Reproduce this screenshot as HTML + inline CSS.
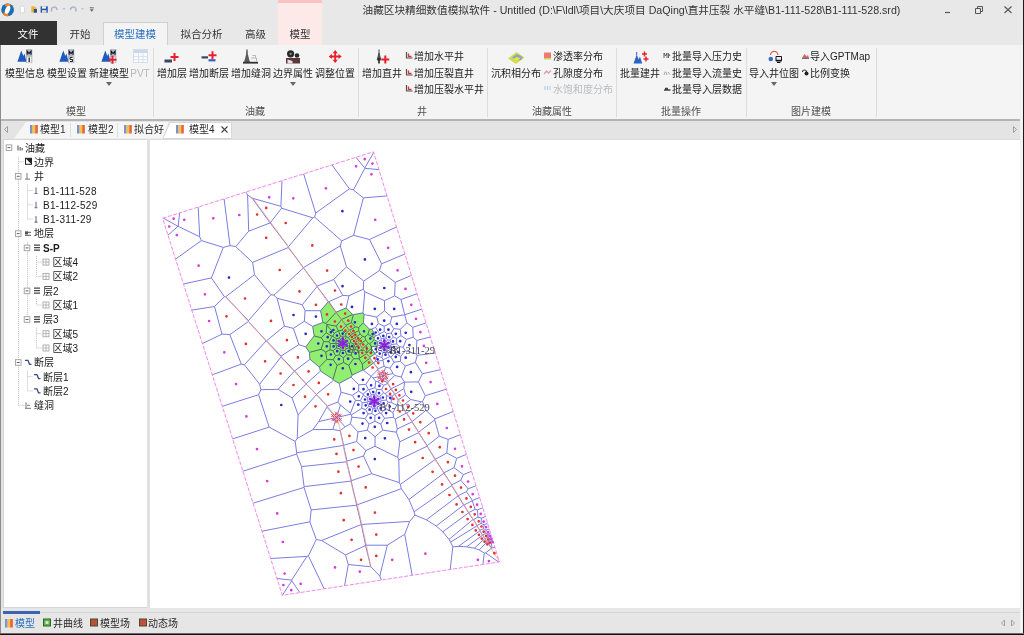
<!DOCTYPE html>
<html lang="zh">
<head>
<meta charset="utf-8">
<title>油藏区块精细数值模拟软件</title>
<style>
*{box-sizing:border-box;margin:0;padding:0}
html,body{width:1024px;height:635px;overflow:hidden;background:#e1e1e1}
body{position:relative;font-family:"Liberation Sans","Noto Sans CJK SC",sans-serif;font-size:10px;color:#2a2a2a;line-height:12px}
.abs{position:absolute}
.t{position:absolute;white-space:nowrap;height:12px;line-height:12px}
.c{transform:translateX(-50%)}
#titlebar{left:0;top:0;width:1024px;height:22px;background:#e8e8e8}
#tabrow{left:0;top:22px;width:1024px;height:23px;background:#e8e8e8}
#ribbon{left:0;top:45px;width:1024px;height:76px;background:#f4f4f4;border-bottom:2px solid #b4b4b4}
.sep{position:absolute;top:48px;width:1px;height:69px;background:#dcdcdc}
.gl{position:absolute;top:105.5px;white-space:nowrap;transform:translateX(-50%);color:#505050}
.bl{position:absolute;top:68px;white-space:nowrap;transform:translateX(-50%);color:#222}
.sl{position:absolute;white-space:nowrap;color:#222}
.dd{position:absolute;width:0;height:0;border-left:3px solid transparent;border-right:3px solid transparent;border-top:4px solid #666;top:82px}
#doctabs{left:0;top:121px;width:1024px;height:18px;background:#e4e4e4}
#left{left:3px;top:138.5px;width:143.5px;height:469.5px;background:#fff;border:1px solid #d6d6d6;border-right:none}
#main{left:150px;top:138.5px;width:870px;height:469.5px;background:#fff;border-top:1px solid #dcdcdc}
#bottom{left:0;top:608px;width:1021px;height:26px;background:#e6e6e6}
.tr{position:absolute;white-space:nowrap;height:14px;line-height:14px;font-size:10px;color:#1a1a1a}
.eb{position:absolute;width:7px;height:7px;border:1px solid #9a9a9a;background:#fff}
.eb:after{content:"";position:absolute;left:1px;top:2px;width:3px;height:1px;background:#555}
.t,.tr,.bl,.sl,.gl,svg{filter:blur(.35px)}
</style>
</head>
<body>
<div id="titlebar" class="abs"></div>
<div id="tabrow" class="abs"></div>
<!-- contextual tab header -->
<div class="abs" style="left:277.500px;top:0;width:44px;height:45px;background:#fce9e8"></div>
<div class="abs" style="left:277.500px;top:0;width:44px;height:2.500px;background:#f8c3c2"></div>
<!-- logo -->
<svg class="abs" style="left:0;top:0" width="100" height="22" viewBox="0 0 100 22">
<circle cx="7.600" cy="9.800" r="6.400" fill="#1b6db6"/>
<path d="M4.300 4.400A6.400 6.400 0 0 1 10.900 4.400L9.600 6.800A3.600 3.600 0 0 0 5.800 6.600z" fill="#f08428"/>
<path d="M2.300 13.400A6.400 6.400 0 0 0 8.600 16.100L7.900 13.400A3.600 3.600 0 0 1 4.800 12z" fill="#f08428"/>
<ellipse cx="7.600" cy="9.800" rx="2.300" ry="4.300" transform="rotate(22 7.600 9.800)" fill="#fff"/>
<path d="M20.300 6h2.700l1.500 1.500v5.200h-4.200z" fill="#fff" stroke="#cfcfcf" stroke-width=".7"/>
<path d="M31.300 6.300h3.200v1h2v5.200h-5.200z" fill="#eab530"/><rect x="33.800" y="9" width="3.200" height="3.700" fill="#2e4f9a"/>
<rect x="40.600" y="6.300" width="7.200" height="6.400" fill="#2b5cb2"/><rect x="42" y="6.300" width="4" height="2.300" fill="#f4f6fa"/><rect x="42" y="10.200" width="4.400" height="2.500" fill="#dfe6d0"/>
<path d="M52 11.500a2.800 2.800 0 1 1 5 -1.500" fill="none" stroke="#a9b3c6" stroke-width="1.500"/>
<path d="M62.700 8.300h2.600l-1.300 1.600z" fill="#b4b4b4"/>
<path d="M75.500 11.500a2.800 2.800 0 1 0 -5 -1.500" fill="none" stroke="#a9b3c6" stroke-width="1.500"/>
<path d="M81.200 8.300h2.600l-1.300 1.600z" fill="#b4b4b4"/>
<path d="M89.800 7.800h4" stroke="#666" stroke-width="1"/><path d="M89.800 9.300h4l-2 2.400z" fill="#666"/>
</svg>
<div class="t" style="left:362.500px;top:4px;font-size:10.65px;color:#333">油藏区块精细数值模拟软件 - Untitled (D:\F\ldl\项目\大庆项目 DaQing\直井压裂 水平缝\B1-111-528\B1-111-528.srd)</div>
<!-- window buttons -->
<svg class="abs" style="left:930px;top:0" width="94" height="22" viewBox="0 0 94 22"><path d="M15 12.5h5" stroke="#555" stroke-width="1.2"/><path d="M45.5 8.5h5v5h-5zM47.5 8.5v-2h5v5h-2" fill="none" stroke="#555" stroke-width="1"/><path d="M74.500 6.500l7 6.500M81.500 6.500l-7 6.500" stroke="#555" stroke-width="1.100"/></svg>
<!-- ribbon tabs -->
<div class="abs" style="left:0;top:21px;width:57px;height:24px;background:#323232"></div>
<div class="t c" style="left:28px;top:27.6px;color:#fff;font-size:10.5px">文件</div>
<div class="t c" style="left:80px;top:27.6px;font-size:10.5px;color:#333">开始</div>
<div class="abs" style="left:103px;top:22px;width:65px;height:24px;background:#f4f4f4;border:1px solid #d0d0d0;border-bottom:none"></div>
<div class="t c" style="left:135px;top:27.6px;font-size:10.5px;color:#2a6fc0">模型建模</div>
<div class="t c" style="left:201.500px;top:27.6px;font-size:10.5px;color:#333">拟合分析</div>
<div class="t c" style="left:255.500px;top:27.6px;font-size:10.5px;color:#333">高级</div>
<div class="t c" style="left:300px;top:27.6px;font-size:10.5px;color:#333">模型</div>
<div id="ribbon" class="abs"></div>
<div class="sep" style="left:153px"></div><div class="sep" style="left:358px"></div><div class="sep" style="left:487px"></div><div class="sep" style="left:616px"></div><div class="sep" style="left:746px"></div><div class="sep" style="left:876px"></div>
<div class="gl" style="left:76px">模型</div><div class="gl" style="left:255px">油藏</div><div class="gl" style="left:422px">井</div><div class="gl" style="left:552px">油藏属性</div><div class="gl" style="left:681px">批量操作</div><div class="gl" style="left:811px">图片建模</div>
<!-- large buttons labels -->
<div class="bl" style="left:25px">模型信息</div><div class="bl" style="left:67px">模型设置</div><div class="bl" style="left:109px">新建模型</div><div class="bl" style="left:140px;color:#b8b8b8">PVT</div>
<div class="bl" style="left:172px">增加层</div><div class="bl" style="left:209px">增加断层</div><div class="bl" style="left:251px">增加缝洞</div><div class="bl" style="left:293px">边界属性</div><div class="bl" style="left:335px">调整位置</div>
<div class="bl" style="left:382px">增加直井</div><div class="bl" style="left:516px">沉积相分布</div><div class="bl" style="left:640px">批量建井</div><div class="bl" style="left:774px">导入井位图</div>
<div class="dd" style="left:106px"></div><div class="dd" style="left:290px"></div><div class="dd" style="left:771px"></div>
<!-- small buttons -->
<div class="sl" style="left:414px;top:51px">增加水平井</div><div class="sl" style="left:414px;top:67.5px">增加压裂直井</div><div class="sl" style="left:414px;top:84px">增加压裂水平井</div>
<div class="sl" style="left:553px;top:51px">渗透率分布</div><div class="sl" style="left:553px;top:67.5px">孔隙度分布</div><div class="sl" style="left:553px;top:84px;color:#b9bcc2">水饱和度分布</div>
<div class="sl" style="left:672px;top:51px">批量导入压力史</div><div class="sl" style="left:672px;top:67.5px">批量导入流量史</div><div class="sl" style="left:672px;top:84px">批量导入层数据</div>
<div class="sl" style="left:810px;top:51px">导入GPTMap</div><div class="sl" style="left:810px;top:67.5px">比例变换</div>
<!-- ribbon icons placeholder -->
<svg id="ricons" class="abs" style="left:0;top:45px" width="1024" height="50" viewBox="0 45 1024 50">
<defs>
<g id="drk"><path d="M-.3 12.300l3.900-11.300l2 5.500l1.200-2.500l2 8.300z" fill="#1f5bbf"/><rect x="8.300" y="-.400" width="6.300" height="14" fill="#aeb6c4"/><rect x="9.300" y="7.300" width="4.300" height="5.700" fill="#f0f2f6"/><path d="M9.500 5.200v-3.400l1.900 2.200l1.900-2.200v3.400" stroke="#111" stroke-width="1.100" fill="none"/></g>
<g id="plus"><path d="M-4 0h8M0-4v8" stroke="#e8202a" stroke-width="2"/></g>
<g id="sm1"><path d="M1 0v6h6" stroke="#555" stroke-width="1.200" fill="none"/><path d="M3 1.500v3h3" stroke="#d8323a" stroke-width="1.400" fill="none"/></g>
</defs>
<use href="#drk" x="17.700" y="49.500"/><path d="M29.200 57.500v4.500" stroke="#1a1a1a" stroke-width="1.200"/>
<use href="#drk" x="59.700" y="49.500"/><path d="M72.500 57.500h-2.500v2h2.500v2h-2.500" stroke="#1a1a1a" stroke-width="1" fill="none"/>
<use href="#drk" x="101.700" y="49.500"/><use href="#plus" x="112.500" y="59.700"/>
<rect x="133.500" y="49.500" width="14" height="13" fill="#f8fafc" stroke="#d5dde8" stroke-width="1"/><rect x="134" y="50" width="13" height="3" fill="#c9d8ec"/><path d="M134 56.500h13M134 59.500h13M138.500 53v9.500M143 53v9.500" stroke="#d5dde8" stroke-width=".8"/>
<!-- add layer -->
<rect x="164.500" y="59.500" width="7.500" height="3" fill="#3d4660"/><use href="#plus" x="174.500" y="57"/>
<!-- add fault -->
<rect x="201.500" y="56.300" width="6.500" height="2.200" fill="#3d4660"/><rect x="208.500" y="59.200" width="7" height="2.200" fill="#3b58c8"/><use href="#plus" x="212.500" y="55.200"/>
<!-- add cavity -->
<path d="M247 51l-3 11.500h6z" fill="#5a5a5a"/><path d="M247 49.500v4" stroke="#444" stroke-width="1.200"/><rect x="243" y="61.800" width="15" height="1.800" fill="#333"/><path d="M251 58h5.500v3.500M252.500 55.500h3v2.500" stroke="#b5b5b5" stroke-width="1" fill="none"/>
<!-- boundary property -->
<circle cx="290.600" cy="53.800" r="3.600" fill="#2a2a2a"/><circle cx="290.600" cy="53.800" r="1.100" fill="#999"/><circle cx="297" cy="55.500" r="2.300" fill="#2a2a2a"/><path d="M286 58h14v5.500h-14z" fill="#5a3a3a"/><path d="M287.500 63.500v-4l5 1.500v2.500z" fill="#e8e0e0"/>
<!-- move -->
<path d="M335.200 50l2.600 3.200h-1.700v2.400h2.400v-1.700l3.200 2.600l-3.200 2.600v-1.700h-2.400v2.400h1.700l-2.600 3.200l-2.600-3.200h1.700v-2.400h-2.400v1.700l-3.200-2.600l3.200-2.600v1.700h2.400v-2.400h-1.700z" fill="#e8202a"/>
<!-- add vertical well -->
<path d="M379 49.500v4M379 53l-1.800 7h3.600z" stroke="#444" stroke-width="1" fill="#555"/><path d="M379 58v5.500" stroke="#222" stroke-width="1.600"/><use href="#plus" x="385.300" y="59.500"/>
<use href="#sm1" x="405.500" y="52"/><use href="#sm1" x="405.500" y="69"/><use href="#sm1" x="405.500" y="85"/>
<!-- facies -->
<path d="M508 58.500l8.500-6.500l8 5.500l-8.500 6.500z" fill="#d2dc50"/><path d="M512 57.500l5-3.500l5.500 3l-1 3l-6 .5z" fill="#8fa4c0"/><path d="M513 59l4-2l3.500 1.500l-4 2.500z" fill="#e6e840"/>
<!-- perm -->
<rect x="544" y="52.500" width="7" height="6.500" fill="#ee7b6c"/><rect x="544" y="58" width="7" height="1.500" fill="#c8d860"/>
<path d="M544 74l2.500-3l2 2l2.500-2.500" stroke="#d9a0a8" stroke-width="1.300" fill="none"/>
<path d="M545 86v4M547.500 86v4M550 86v4" stroke="#b8d0ea" stroke-width="1.200"/>
<!-- batch wells -->
<path d="M633.500 63.500l3.200-9l2 5l1.200-3l2.300 7z" fill="#2b62c4"/><path d="M636.700 55v-3" stroke="#2b62c4" stroke-width="1"/>
<path d="M642 54h5M644.500 51.500v5M643.500 59h5M646 56.500v5" stroke="#e8202a" stroke-width="1.400"/>
<path d="M664 58v-5l1.500 3l1.500-3v5M668.500 58v-4.500l1.500 2.500" stroke="#555" stroke-width=".9" fill="none"/>
<path d="M664 75c1-4 2-4 3 0M668 72l2 2.500" stroke="#999" stroke-width="1" fill="none"/>
<path d="M664 90h6.500M665 88.500h3" stroke="#444" stroke-width="1.300"/>
<!-- import well map -->
<path d="M770.500 55a3.700 3.700 0 0 1 7.400 0" stroke="#e06058" stroke-width="1.300" fill="none"/><circle cx="770.800" cy="59" r="2.300" fill="#3a6cc8"/><rect x="775.500" y="56" width="6.500" height="5.500" rx="1" fill="#111"/><rect x="776.500" y="57" width="4.500" height="2.800" fill="#e8eef6"/><path d="M777 62.500h3.500" stroke="#111" stroke-width="1"/>
<path d="M802 58l2.500-4l2 2.500l1.500-1.500l1 3z" fill="#c86a60"/><path d="M802 58.500h7" stroke="#6a6a90" stroke-width="1"/>
<path d="M802.500 72a2 2 0 0 1 4 0" stroke="#444" stroke-width="1.200" fill="none"/><circle cx="806.500" cy="73.500" r="2" fill="#222"/>

</svg>
<!-- doc tabs -->
<div id="doctabs" class="abs"></div>
<svg class="abs" style="left:0;top:120px" width="1024" height="19" viewBox="0 120 1024 19">
<path d="M14 138.500L26 122H168.500L163 138.500z" fill="#f6f6f6"/>
<path d="M70.500 123v14M117.500 123v14" stroke="#dedede" stroke-width="1"/>
<path d="M163 138.500L170 122.500H231.500V138.500z" fill="#fff" stroke="#cfcfcf" stroke-width=".8"/>
<path d="M7.500 126.500l-3 3l3 3z" fill="none" stroke="#999" stroke-width=".9"/>
<path d="M1013.500 126.500l3 3l-3 3z" fill="none" stroke="#999" stroke-width=".9"/>
<g id="ti"><rect x="30" y="125" width="2.600" height="8.500" fill="#7f92c8"/><rect x="32.600" y="125" width="2.600" height="8.500" fill="#f4c542"/><rect x="35.200" y="125" width="2.600" height="8.500" fill="#e8603c"/></g>
<use href="#ti" x="47"/><use href="#ti" x="94"/><use href="#ti" x="146"/>
<path d="M221.500 126.500l6 6M227.500 126.500l-6 6" stroke="#444" stroke-width="1.100"/>
</svg>
<div class="t" style="left:40px;top:124px">模型1</div><div class="t" style="left:88px;top:124px">模型2</div><div class="t" style="left:134px;top:124px">拟合好</div><div class="t" style="left:189px;top:124px">模型4</div>
<div id="left" class="abs"></div>
<div id="main" class="abs"></div>
<div id="bottom" class="abs"></div>
<div class="abs" style="left:1020px;top:0;width:3px;height:635px;background:#f2f2f2"></div>
<div class="abs" style="left:1020px;top:0;width:3px;height:45px;background:#e8e8e8"></div>
<div class="abs" style="left:1023px;top:0;width:1px;height:635px;background:#1a1a1a"></div>
<div class="abs" style="left:0;top:45px;width:1px;height:590px;background:#8c8c8c"></div>
<div class="abs" style="left:0;top:633px;width:1024px;height:2px;background:#141414"></div><div class="abs" style="left:0;top:633px;width:1024px;height:1px;background:#6a6a6a"></div>
<div class="abs" style="left:3px;top:612px;width:1017px;height:1px;background:#d4d4d4"></div><div class="abs" style="left:3px;top:611px;width:37px;height:3px;background:#3d64b2"></div>
<div class="t" style="left:15px;top:618px;color:#2a6fc0">模型</div><div class="t" style="left:53px;top:618px">井曲线</div><div class="t" style="left:100px;top:618px">模型场</div><div class="t" style="left:148px;top:618px">动态场</div>
<svg class="abs" style="left:0;top:612px" width="1024" height="20" viewBox="0 612 1024 20">
<use href="#ti" x="-25" y="494"/>
<rect x="43.500" y="619" width="7" height="7" fill="#5fae4a" stroke="#2d6a24" stroke-width="1"/><rect x="45.500" y="621" width="3" height="3" fill="#cfe8c4"/>
<rect x="90.500" y="619" width="7" height="7" fill="#b5543a" stroke="#4a4a30" stroke-width="1"/>
<rect x="139.500" y="619" width="7" height="7" fill="#c2503c" stroke="#4a4a30" stroke-width="1"/>
<path d="M1004.500 620l-3 3l3 3z" fill="none" stroke="#999" stroke-width=".9"/><path d="M1011.500 620l3 3l-3 3z" fill="none" stroke="#999" stroke-width=".9"/>
</svg>
<svg class="abs" style="left:0;top:139px" width="150" height="290" viewBox="0 139 150 290">
<path d="M18.5 156.8V405.3M27.5 184.5V219.1M27.5 241.7V319.3M36.5 256.1V276.4M36.5 299.0V305.0M36.5 327.7V348.0M27.5 370.6V390.9M18.5 161.8H24M27.5 190.5H33M27.5 204.8H33M27.5 219.1H33M36.5 262.1H42M36.5 276.4H42M36.5 305.0H42M36.5 333.7H42M36.5 348.0H42M27.5 376.6H33M27.5 390.9H33M18.5 405.3H24" stroke="#bdbdbd" stroke-width="1" stroke-dasharray="1 1" fill="none"/>
<rect x="6.2" y="144.9" width="5.6" height="5.6" fill="#fff" stroke="#9c9c9c" stroke-width=".9"/><path d="M7.5 147.7h3" stroke="#555" stroke-width=".9"/>
<path d="M18.0 150.5v-5M20.2 150.5v-3.500M22.2 150.5v-2.500" stroke="#666" stroke-width="1.2"/>
<rect x="25.5" y="158.3" width="6" height="6" fill="#fff" stroke="#222" stroke-width="1"/><path d="M25.5 158.3h6v6z" fill="#222"/>
<rect x="15.4" y="173.5" width="5.6" height="5.6" fill="#fff" stroke="#9c9c9c" stroke-width=".9"/><path d="M16.7 176.3h3" stroke="#555" stroke-width=".9"/>
<path d="M27.0 179.1v-6M25.0 179.1h5" stroke="#777" stroke-width="1"/>
<path d="M36.0 193.5v-6M34.5 193.5h3" stroke="#6a7290" stroke-width="1.1"/>
<path d="M36.0 207.8v-6M34.5 207.8h3" stroke="#6a7290" stroke-width="1.1"/>
<path d="M36.0 222.1v-6M34.5 222.1h3" stroke="#6a7290" stroke-width="1.1"/>
<rect x="15.4" y="230.8" width="5.6" height="5.6" fill="#fff" stroke="#9c9c9c" stroke-width=".9"/><path d="M16.7 233.6h3" stroke="#555" stroke-width=".9"/>
<path d="M25.0 232.4h6M25.0 235.4h6" stroke="#777" stroke-width="1.4"/><rect x="25.0" y="231.4" width="3" height="3" fill="#555"/>
<rect x="24.2" y="245.1" width="5.6" height="5.6" fill="#fff" stroke="#9c9c9c" stroke-width=".9"/><path d="M25.5 247.9h3" stroke="#555" stroke-width=".9"/>
<path d="M34.0 245.2h6M34.0 247.7h6M34.0 250.2h6" stroke="#444" stroke-width="1.3"/>
<rect x="43.0" y="259.1" width="6" height="6" fill="#fff" stroke="#aaa" stroke-width="0.9"/><path d="M46.0 259.1v6M43.0 262.1h6" stroke="#aaa" stroke-width="0.8"/>
<rect x="43.0" y="273.4" width="6" height="6" fill="#fff" stroke="#aaa" stroke-width="0.9"/><path d="M46.0 273.4v6M43.0 276.4h6" stroke="#aaa" stroke-width="0.8"/>
<rect x="24.2" y="288.1" width="5.6" height="5.6" fill="#fff" stroke="#9c9c9c" stroke-width=".9"/><path d="M25.5 290.9h3" stroke="#555" stroke-width=".9"/>
<path d="M34.0 288.2h6M34.0 290.7h6M34.0 293.2h6" stroke="#444" stroke-width="1.3"/>
<rect x="43.0" y="302.0" width="6" height="6" fill="#fff" stroke="#aaa" stroke-width="0.9"/><path d="M46.0 302.0v6M43.0 305.0h6" stroke="#aaa" stroke-width="0.8"/>
<rect x="24.2" y="316.7" width="5.6" height="5.6" fill="#fff" stroke="#9c9c9c" stroke-width=".9"/><path d="M25.5 319.5h3" stroke="#555" stroke-width=".9"/>
<path d="M34.0 316.8h6M34.0 319.3h6M34.0 321.8h6" stroke="#444" stroke-width="1.3"/>
<rect x="43.0" y="330.7" width="6" height="6" fill="#fff" stroke="#aaa" stroke-width="0.9"/><path d="M46.0 330.7v6M43.0 333.7h6" stroke="#aaa" stroke-width="0.8"/>
<rect x="43.0" y="345.0" width="6" height="6" fill="#fff" stroke="#aaa" stroke-width="0.9"/><path d="M46.0 345.0v6M43.0 348.0h6" stroke="#aaa" stroke-width="0.8"/>
<rect x="15.4" y="359.7" width="5.6" height="5.6" fill="#fff" stroke="#9c9c9c" stroke-width=".9"/><path d="M16.7 362.5h3" stroke="#555" stroke-width=".9"/>
<path d="M25.0 360.3h3l1.500 4h2" stroke="#3a4a90" stroke-width="1.3" fill="none"/>
<path d="M34.0 374.6h3l1.500 4h2" stroke="#3a4a90" stroke-width="1.3" fill="none"/>
<path d="M34.0 388.9h3l1.500 4h2" stroke="#3a4a90" stroke-width="1.3" fill="none"/>
<path d="M26.0 408.3v-6M25.0 408.3h6M27.0 405.3h3" stroke="#777" stroke-width="1"/>
</svg>
<div class="tr" style="left:25.0px;top:141.5px">油藏</div>
<div class="tr" style="left:34.0px;top:155.8px">边界</div>
<div class="tr" style="left:34.0px;top:170.1px">井</div>
<div class="tr" style="left:43.0px;top:184.5px;letter-spacing:.3px">B1-111-528</div>
<div class="tr" style="left:43.0px;top:198.8px;letter-spacing:.3px">B1-112-529</div>
<div class="tr" style="left:43.0px;top:213.1px;letter-spacing:.3px">B1-311-29</div>
<div class="tr" style="left:34.0px;top:227.4px">地层</div>
<div class="tr" style="left:43.0px;top:241.7px;font-weight:bold">S-P</div>
<div class="tr" style="left:52.5px;top:256.1px">区域4</div>
<div class="tr" style="left:52.5px;top:270.4px">区域2</div>
<div class="tr" style="left:43.0px;top:284.7px">层2</div>
<div class="tr" style="left:52.5px;top:299.0px">区域1</div>
<div class="tr" style="left:43.0px;top:313.3px">层3</div>
<div class="tr" style="left:52.5px;top:327.7px">区域5</div>
<div class="tr" style="left:52.5px;top:342.0px">区域3</div>
<div class="tr" style="left:34.0px;top:356.3px">断层</div>
<div class="tr" style="left:43.0px;top:370.6px">断层1</div>
<div class="tr" style="left:43.0px;top:384.9px">断层2</div>
<div class="tr" style="left:34.0px;top:399.3px">缝洞</div>
<svg class="abs" style="left:150px;top:139px" width="870" height="469" viewBox="150 139 870 469" font-family="Liberation Serif,serif">
<path d="M322.8 322.4L312.6 326.3L314.1 335.9L305.7 346.9L309.4 352.4L309.9 359.3L319.3 367.1L320.5 371.1L333.0 379.3L333.6 380.3L339.2 383.4L351.1 377.1L352.2 375.2L362.9 370.1L363.5 370.3L373.7 363.0L373.7 362.8L369.9 358.2L369.9 357.4L375.2 353.8L375.2 353.7L371.4 348.5L371.5 346.8L377.4 346.1L377.9 345.5L377.7 341.5L374.2 339.6L374.2 337.7L375.6 335.9L371.9 329.0L369.5 329.2L363.4 322.8L364.2 314.6L363.0 312.8L353.3 314.6L352.6 314.5L346.2 307.8L336.0 312.1L328.8 301.7L328.4 301.6L320.5 310.7Z" fill="#92ee70" stroke="none"/>
<path d="M163.4 218.1L178.0 226.3M168.0 235.2L178.0 226.3M175.5 259.1L201.4 240.6M178.0 226.3L178.2 226.3M178.2 226.3L179.6 212.9M178.2 226.3L199.7 236.8M183.5 284.0L211.4 277.9M191.7 310.1L214.5 306.5M198.2 207.1L199.7 236.8M199.7 236.8L201.4 240.6M201.4 240.6L223.3 247.4M202.4 343.6L222.0 334.1M211.4 277.9L223.3 247.4M211.4 277.9L224.4 296.7M212.3 374.8L241.3 364.1M214.5 306.5L222.0 334.1M214.5 306.5L224.4 296.7M222.0 334.1L229.8 334.6M222.3 406.3L258.6 394.7M223.3 247.4L230.0 245.6M224.1 198.9L230.0 245.6M224.4 296.7L225.6 296.8M225.6 296.8L248.5 320.7M225.6 296.8L254.5 274.7M229.8 334.6L241.3 364.1M229.8 334.6L248.5 321.5M230.0 245.6L235.7 246.6M232.6 438.9L269.2 427.1M235.7 246.6L248.7 231.2M235.7 246.6L252.6 262.4M241.3 364.1L244.4 364.8M242.9 471.2L296.6 454.1M244.4 364.8L259.6 384.2M244.4 364.8L266.2 340.8M245.9 192.0L247.6 195.0M247.6 195.0L248.7 231.2M247.6 195.0L252.2 198.2M248.5 320.7L248.5 321.5M248.5 320.7L270.9 294.7M248.5 321.5L266.2 340.8M248.7 231.2L270.1 222.9M252.2 198.2L270.1 222.9M252.2 198.2L280.9 206.3M252.6 262.4L254.5 274.7M252.6 262.4L288.3 247.5M253.1 503.2L304.0 487.4M254.5 274.7L270.9 294.7M258.6 394.7L260.9 389.7M258.6 394.7L269.2 427.1M259.6 384.2L260.9 389.7M259.6 384.2L281.2 356.8M260.9 389.7L278.1 389.3M262.0 531.2L309.9 521.8M266.2 340.8L266.4 340.9M266.4 340.9L281.1 356.0M266.4 340.9L284.4 326.1M269.2 427.1L295.2 441.4M270.1 222.9L270.2 222.9M270.2 222.9L281.6 208.2M270.2 222.9L288.4 246.8M270.6 558.5L306.9 556.4M270.9 294.7L273.9 295.2M273.9 295.2L277.1 298.3M273.9 295.2L303.4 267.9M277.0 578.5L291.7 580.1M277.1 298.3L284.4 326.1M277.1 298.3L302.3 304.7M278.1 389.3L292.1 397.9M278.1 389.3L294.4 371.0M280.9 206.3L281.6 208.2M280.9 206.3L282.0 180.7M281.1 356.0L281.2 356.8M281.1 356.0L298.9 344.6M281.2 356.8L294.4 371.0M281.6 208.2L312.8 217.8M282.3 595.3L291.8 580.8M284.4 326.1L293.4 328.4M288.3 247.5L288.4 246.8M288.3 247.5L303.4 267.6M288.4 246.8L312.8 217.8M291.7 580.1L291.8 580.8M291.7 580.1L306.9 556.4M291.8 580.8L299.8 592.6M292.1 397.9L298.1 414.8M292.1 397.9L306.2 384.1M293.4 328.4L298.9 344.6M293.4 328.4L304.3 321.3M294.4 371.0L294.6 371.0M294.6 371.0L306.1 383.9M294.6 371.0L309.9 359.3M295.2 441.4L296.7 452.8M295.2 441.4L297.2 438.5M296.6 454.1L296.7 452.8M296.6 454.1L301.5 466.6M296.7 452.8L343.5 445.4M297.2 438.5L298.1 414.8M297.2 438.5L312.9 429.6M298.1 414.8L316.5 394.7M298.9 344.6L305.7 346.9M301.5 466.6L304.1 486.6M301.5 466.6L346.6 461.8M302.3 304.7L305.1 310.7M302.3 304.7L317.1 286.5M303.4 267.6L303.4 267.9M303.4 267.6L340.3 245.9M303.4 267.9L317.1 286.1M303.6 173.8L315.7 213.1M304.0 487.4L304.1 486.6M304.0 487.4L311.2 509.9M304.1 486.6L351.2 481.1M304.3 321.3L305.1 310.7M304.3 321.3L312.6 326.3M305.1 310.7L320.5 310.7M305.7 346.9L309.4 352.4M305.7 346.9L314.1 335.9M306.1 383.9L306.2 384.1M306.1 383.9L320.5 371.1M306.2 384.1L316.4 394.3M306.9 556.4L308.4 555.8M308.4 555.8L316.3 539.5M308.4 555.8L324.2 588.9M309.4 352.4L309.9 359.3M309.4 352.4L321.1 349.3M309.9 359.3L319.3 367.1M309.9 521.8L311.2 509.9M309.9 521.8L316.3 539.5M311.2 509.9L356.6 505.2M312.6 326.3L314.1 335.9M312.6 326.3L322.8 322.4M312.8 217.8L314.6 217.1M312.9 429.6L318.7 421.6M312.9 429.6L332.8 429.5M314.1 335.9L321.3 337.8M314.6 217.1L315.7 213.1M314.6 217.1L341.7 240.9M315.7 213.1L349.4 188.8M316.3 539.5L321.6 540.5M316.4 394.3L316.5 394.7M316.4 394.3L333.6 380.3M316.5 394.7L327.3 406.1M317.1 286.1L317.1 286.5M317.1 286.1L333.7 279.5M317.1 286.5L328.4 301.6M318.7 421.6L326.9 407.2M318.7 421.6L336.5 417.5M319.3 367.1L320.5 371.1M319.3 367.1L326.8 359.5M320.5 310.7L322.8 322.4M320.5 310.7L328.4 301.6M320.5 371.1L333.0 379.3M321.1 349.3L323.7 341.4M321.1 349.3L325.8 352.0M321.3 337.8L323.7 341.4M321.3 337.8L326.1 332.6M321.6 540.5L345.5 554.9M321.6 540.5L361.3 524.5M322.8 322.4L326.0 323.4M323.7 341.4L328.9 341.9M325.8 352.0L326.8 359.5M325.8 352.0L330.1 349.8M326.0 323.4L326.8 324.4M326.0 323.4L336.0 312.4M326.1 332.6L326.8 325.1M326.1 332.6L332.0 336.4M326.8 324.4L326.8 325.1M326.8 324.4L336.2 326.1M326.8 325.1L334.2 333.4M326.8 359.5L333.2 359.7M326.9 407.2L327.3 406.1M326.9 407.2L336.5 417.5M327.3 406.1L337.8 402.1M328.4 301.6L328.8 301.7M328.8 301.7L336.0 312.1M328.8 301.7L342.8 295.4M328.9 341.9L330.2 343.5M328.9 341.9L332.0 336.4M330.1 349.8L330.2 343.5M330.1 349.8L332.9 350.7M330.2 343.5L335.8 343.4M332.0 164.9L349.4 188.8M332.0 336.4L332.7 336.2M332.7 336.2L334.2 333.4M332.7 336.2L336.5 338.8M332.8 429.5L336.5 417.5M332.8 429.5L340.2 430.7M332.9 350.7L335.6 355.7M332.9 350.7L336.6 348.0M333.0 379.3L333.6 380.3M333.0 379.3L337.1 365.3M333.2 359.7L335.6 355.7M333.2 359.7L337.1 365.3M333.6 380.3L339.2 383.4M333.7 279.5L342.8 295.4M333.7 279.5L346.5 266.8M334.2 333.4L338.3 330.8M335.6 355.7L339.2 354.9M335.8 343.4L335.9 343.5M335.8 343.4L336.5 338.8M335.9 343.5L336.6 348.0M335.9 343.5L342.8 343.3M336.0 312.1L336.0 312.4M336.0 312.1L346.2 307.8M336.0 312.4L341.5 319.5M336.2 326.1L338.3 330.8M336.2 326.1L341.5 319.8M336.5 338.8L339.5 337.8M336.5 417.5L340.4 405.0M336.5 417.5L345.1 426.8M336.5 417.5L350.9 414.2M336.6 348.0L339.7 348.9M337.1 365.3L343.6 362.5M337.8 402.1L340.4 405.0M337.8 402.1L341.1 392.2M338.3 330.8L338.6 330.9M338.6 330.9L340.4 336.2M338.6 330.9L341.9 330.1M339.2 354.9L340.6 350.4M339.2 354.9L343.4 357.7M339.2 383.4L341.1 392.2M339.2 383.4L351.1 377.1M339.5 337.8L340.4 336.2M339.5 337.8L342.8 343.3M339.7 348.9L340.6 350.4M339.7 348.9L342.8 343.3M340.2 430.7L343.6 445.3M340.2 430.7L345.1 426.8M340.3 245.9L341.7 240.9M340.3 245.9L346.5 266.8M340.4 336.2L345.8 336.2M340.4 405.0L350.4 413.3M340.6 350.4L345.2 350.4M341.1 392.2L352.3 395.3M341.5 319.5L341.5 319.8M341.5 319.5L352.6 314.5M341.5 319.8L346.0 325.3M341.7 240.9L353.6 235.3M341.9 330.1L345.9 333.9M341.9 330.1L346.0 325.7M342.8 295.4L348.9 295.8M342.8 343.3L346.1 348.8M342.8 343.3L346.3 336.9M342.8 343.3L349.8 343.1M343.4 357.7L343.6 362.5M343.4 357.7L346.7 354.8M343.5 445.4L343.6 445.3M343.5 445.4L347.0 461.1M343.6 362.5L348.8 365.4M343.6 445.3L356.7 441.5M344.6 585.7L348.3 564.5M345.1 426.8L350.4 423.8M345.2 350.4L346.1 348.8M345.2 350.4L346.7 354.8M345.5 554.9L348.3 564.5M345.5 554.9L365.5 545.5M345.8 336.2L345.9 333.9M345.8 336.2L346.3 336.9M345.9 333.9L349.3 330.1M346.0 325.3L346.0 325.7M346.0 325.3L351.3 322.8M346.0 325.7L349.3 330.1M346.1 348.8L349.1 347.8M346.2 307.8L348.9 295.8M346.2 307.8L352.6 314.5M346.3 336.9L348.2 337.6M346.5 266.8L363.7 281.1M346.6 461.8L347.0 461.1M346.6 461.8L351.4 480.7M346.7 354.8L351.1 355.1M347.0 461.1L363.5 456.0M348.2 337.6L350.4 340.4M348.2 337.6L352.4 333.9M348.3 564.5L370.9 566.8M348.8 365.4L352.2 375.2M348.8 365.4L353.6 358.7M348.9 295.8L363.3 289.2M349.1 347.8L349.8 343.1M349.1 347.8L352.7 350.3M349.3 330.1L349.6 330.1M349.4 188.8L353.4 190.0M349.6 330.1L352.4 333.9M349.6 330.1L355.6 326.9M349.8 343.1L350.4 342.5M350.4 340.4L350.4 342.5M350.4 340.4L354.9 337.9M350.4 342.5L353.5 343.8M350.4 413.3L350.9 414.2M350.4 413.3L355.4 400.3M350.4 423.8L351.9 417.2M350.4 423.8L358.0 431.9M350.9 414.2L351.4 414.9M351.1 355.1L352.7 350.3M351.1 355.1L353.6 358.7M351.1 377.1L352.2 375.2M351.1 377.1L358.8 384.8M351.2 481.1L351.4 480.7M351.2 481.1L356.7 505.0M351.3 322.8L353.3 314.6M351.3 322.8L355.6 326.9M351.4 414.9L351.9 417.2M351.4 414.9L361.7 408.4M351.4 480.7L371.7 473.7M351.9 417.2L365.1 418.6M352.2 375.2L362.9 370.1M352.3 395.3L355.4 400.3M352.3 395.3L358.6 391.1M352.4 333.9L354.9 337.9M352.4 333.9L358.7 330.6M352.6 314.5L353.3 314.6M352.7 350.3L355.0 349.2M353.3 314.6L363.0 312.8M353.4 190.0L363.4 197.9M353.4 190.0L364.8 168.3M353.5 343.8L355.3 347.5M353.5 343.8L357.1 341.2M353.6 235.3L363.4 197.9M353.6 235.3L369.5 239.5M353.6 358.7L359.1 358.8M354.9 337.9L355.0 337.9M355.0 337.9L357.1 341.2M355.0 337.9L360.1 334.1M355.0 349.2L355.3 347.5M355.0 349.2L358.7 351.4M355.3 347.5L359.7 344.3M355.4 400.3L360.5 400.6M355.6 326.9L358.8 327.4M356.0 157.3L364.8 168.0M356.6 505.2L356.7 505.0M356.6 505.2L361.3 524.5M356.7 441.5L358.0 431.9M356.7 441.5L365.9 450.5M356.7 505.0L401.3 488.7M357.1 341.2L357.7 341.4M357.7 341.4L359.7 344.3M357.7 341.4L362.8 336.3M358.0 431.9L367.3 430.2M358.6 391.1L358.8 384.8M358.6 391.1L363.1 394.0M358.7 330.6L358.8 327.4M358.7 330.6L360.1 334.1M358.7 351.4L359.3 358.3M358.7 351.4L362.8 348.8M358.8 327.4L363.4 322.8M358.8 384.8L365.8 384.4M359.1 358.8L359.3 358.3M359.1 358.8L362.3 364.0M359.3 358.3L366.5 353.6M359.7 344.3L359.8 344.3M359.8 344.3L362.8 348.5M359.8 344.3L365.7 340.1M360.1 334.1L362.8 336.3M360.5 400.6L362.2 402.8M360.5 400.6L363.3 395.2M361.3 524.5L365.6 545.2M361.3 524.5L409.7 521.4M361.7 408.4L362.2 402.8M361.7 408.4L365.5 409.5M362.2 402.8L367.3 402.2M362.3 364.0L362.9 370.1M362.3 364.0L369.9 358.2M362.8 336.3L364.9 337.0M362.8 348.5L362.8 348.8M362.8 348.5L368.4 343.4M362.8 348.8L366.5 352.8M362.9 370.1L363.5 370.3M363.0 312.8L364.2 314.6M363.0 312.8L364.8 291.8M363.1 394.0L363.3 395.2M363.1 394.0L368.4 389.5M363.3 289.2L363.7 281.1M363.3 289.2L364.8 291.8M363.3 395.2L367.6 397.6M363.4 197.9L387.0 195.9M363.4 322.8L364.2 314.6M363.4 322.8L369.5 329.2M363.5 370.3L371.1 376.3M363.5 370.3L373.7 363.0M363.5 456.0L365.9 450.5M363.5 456.0L371.7 473.7M363.7 281.1L379.4 270.5M364.2 314.6L376.7 317.0M364.8 168.0L364.8 168.3M364.8 168.0L373.7 152.5M364.8 168.3L379.0 169.6M364.8 291.8L384.5 300.7M364.9 337.0L365.7 340.1M364.9 337.0L367.8 334.4M365.1 418.6L368.1 414.0M365.1 418.6L369.0 424.0M365.5 409.5L368.1 414.0M365.5 409.5L368.7 406.5M365.5 545.5L365.6 545.2M365.5 545.5L370.9 566.8M365.6 545.2L387.3 545.2M365.7 340.1L368.4 343.4M365.8 384.4L368.4 389.5M365.8 384.4L371.1 376.4M365.9 450.5L375.0 446.3M366.5 352.8L366.5 353.6M366.5 352.8L371.4 348.5M366.5 353.6L369.9 357.4M367.3 402.2L367.8 401.6M367.3 402.2L368.7 406.5M367.3 430.2L369.0 424.0M367.3 430.2L375.1 436.8M367.6 397.6L367.8 401.6M367.6 397.6L370.9 395.9M367.8 334.4L369.5 329.2M367.8 334.4L374.2 337.7M367.8 401.6L374.3 401.4M368.1 414.0L371.8 413.5M368.4 343.4L369.7 343.9M368.4 389.5L368.9 389.7M368.7 406.5L371.3 406.9M368.9 389.7L371.3 394.9M368.9 389.7L375.1 387.7M369.0 424.0L374.9 421.3M369.5 239.5L381.6 263.8M369.5 239.5L396.6 226.9M369.5 329.2L371.9 329.0M369.7 343.9L371.5 346.8M369.7 343.9L374.2 339.6M369.9 357.4L369.9 358.2M369.9 357.4L375.2 353.8M369.9 358.2L373.7 362.8M370.9 395.9L371.3 394.9M370.9 395.9L374.3 401.4M370.9 566.8L379.8 576.1M371.1 376.3L371.1 376.4M371.1 376.3L377.5 369.9M371.1 376.4L373.0 378.0M371.3 394.9L375.8 394.0M371.3 406.9L372.8 408.8M371.3 406.9L374.3 401.4M371.4 348.5L371.5 346.8M371.4 348.5L375.2 353.7M371.5 346.8L377.4 346.1M371.7 473.7L399.3 482.6M371.8 413.5L372.8 408.8M371.8 413.5L374.9 415.6M371.9 329.0L375.6 327.4M371.9 329.0L375.6 335.9M372.8 408.8L377.3 407.9M373.0 378.0L375.6 381.3M373.0 378.0L382.9 375.8M373.7 362.8L373.7 363.0M373.7 362.8L375.1 361.7M373.7 363.0L378.1 368.8M374.2 337.7L374.2 339.6M374.2 337.7L375.6 335.9M374.2 339.6L377.7 341.5M374.3 401.4L377.3 395.9M374.3 401.4L377.7 406.9M374.3 401.4L380.8 401.2M374.9 415.6L374.9 421.3M374.9 415.6L379.6 413.0M374.9 421.3L380.8 424.1M375.0 446.3L375.1 436.8M375.0 446.3L397.8 457.4M375.1 361.7L377.0 355.8M375.1 361.7L383.0 360.3M375.1 387.7L375.6 381.3M375.1 387.7L376.7 389.4M375.1 436.8L382.6 430.1M375.2 353.7L375.2 353.8M375.2 353.7L378.8 350.4M375.2 353.8L377.0 355.8M375.6 327.4L378.4 323.5M375.6 327.4L379.6 333.9M375.6 335.9L379.4 334.4M375.6 381.3L377.4 381.6M375.8 394.0L376.7 389.4M375.8 394.0L377.3 395.9M376.7 317.0L378.4 323.5M376.7 317.0L384.5 310.8M376.7 389.4L381.7 389.7M377.0 355.8L381.9 357.6M377.3 395.9L379.9 396.3M377.3 407.9L377.7 406.9M377.3 407.9L379.6 413.0M377.4 346.1L377.9 345.5M377.4 346.1L378.8 350.4M377.4 381.6L381.8 379.4M377.4 381.6L383.7 385.3M377.5 369.9L378.1 368.8M377.5 369.9L382.9 375.8M377.7 341.5L377.9 345.5M377.7 341.5L381.0 339.8M377.7 406.9L381.0 405.2M377.9 345.5L384.4 345.3M378.1 368.8L384.1 366.3M378.4 323.5L384.2 326.2M378.8 350.4L381.4 350.8M379.4 270.5L381.6 263.8M379.4 270.5L395.2 282.3M379.4 334.4L379.6 333.9M379.4 334.4L381.4 338.8M379.6 333.9L384.2 331.5M379.6 413.0L381.2 413.3M379.8 576.1L381.3 580.1M379.8 576.1L387.3 545.2M379.9 396.3L381.3 400.6M379.9 396.3L383.6 392.9M380.8 401.2L381.0 405.2M380.8 401.2L381.3 400.6M380.8 424.1L382.6 430.1M380.8 424.1L384.5 418.3M381.0 339.8L381.4 338.8M381.0 339.8L384.4 345.3M381.0 405.2L385.3 407.6M381.2 413.3L384.5 418.3M381.2 413.3L385.4 408.4M381.3 400.6L386.4 400.0M381.4 338.8L385.9 337.9M381.4 350.8L382.9 352.7M381.4 350.8L384.4 345.3M381.6 263.8L404.9 254.0M381.7 389.7L383.6 392.9M381.7 389.7L383.7 385.3M381.8 379.4L382.9 375.8M381.8 379.4L387.6 382.9M381.9 357.6L382.9 352.7M381.9 357.6L383.1 359.7M382.6 430.1L396.3 432.2M382.9 352.7L387.4 351.8M382.9 375.8L385.6 367.1M382.9 375.8L388.3 381.6M382.9 375.8L393.0 373.5M383.0 360.3L383.1 359.7M383.0 360.3L384.1 366.3M383.1 359.7L389.6 356.8M383.6 392.9L385.5 393.6M383.7 385.3L387.5 383.5M384.1 366.3L385.6 367.1M384.2 326.2L384.2 331.5M384.2 326.2L390.2 323.4M384.2 331.5L386.8 333.5M384.4 345.3L387.4 339.8M384.4 345.3L387.8 350.8M384.4 345.3L390.9 345.1M384.5 300.7L384.5 310.8M384.5 300.7L394.6 295.9M384.5 310.8L391.8 317.0M384.5 418.3L393.5 417.3M385.3 407.6L385.4 408.4M385.3 407.6L388.1 402.2M385.4 408.4L393.0 412.6M385.5 393.6L386.7 396.1M385.5 393.6L391.0 389.0M385.6 367.1L390.0 368.2M385.9 337.9L386.8 333.5M385.9 337.9L387.4 339.8M386.4 400.0L386.7 396.1M386.4 400.0L388.1 402.2M386.7 396.1L392.5 395.9M386.8 333.5L391.3 333.1M387.3 545.2L404.7 534.3M387.4 339.8L390.0 340.2M387.4 351.8L387.8 350.8M387.4 351.8L389.6 356.8M387.5 383.5L387.6 382.9M387.5 383.5L391.0 388.8M387.6 382.9L388.3 381.6M387.8 350.8L391.1 349.1M388.1 402.2L390.9 402.4M388.3 381.6L394.8 375.5M389.6 356.8L391.0 357.1M390.0 340.2L391.4 344.5M390.0 340.2L393.3 337.2M390.0 368.2L393.0 373.5M390.0 368.2L393.9 362.2M390.2 323.4L391.8 317.0M390.2 323.4L393.8 328.6M390.9 345.1L391.1 349.1M390.9 345.1L391.4 344.5M390.9 402.4L392.5 395.9M390.9 402.4L396.7 405.2M391.0 357.1L393.9 362.2M391.0 357.1L394.6 353.2M391.0 388.8L391.0 389.0M391.0 388.8L404.6 382.1M391.0 389.0L394.7 394.4M391.1 349.1L394.6 351.0M391.3 333.1L393.3 337.2M391.3 333.1L393.8 328.6M391.4 344.5L396.7 343.9M391.8 317.0L404.7 314.8M392.5 395.9L394.7 394.4M393.0 373.5L394.8 375.5M393.0 412.6L393.5 417.3M393.0 412.6L396.7 405.2M393.3 337.2L396.6 338.4M393.5 417.3L395.2 419.1M393.8 328.6L400.3 329.3M393.9 362.2L400.4 361.4M394.6 295.9L395.2 282.3M394.6 295.9L401.0 299.5M394.6 351.0L394.6 353.2M394.6 351.0L399.2 346.6M394.6 353.2L400.8 356.4M394.7 394.4L394.8 394.4M394.8 375.5L401.2 377.0M394.8 394.4L398.2 400.0M394.8 394.4L403.8 388.6M395.2 282.3L411.4 275.4M395.2 419.1L397.3 428.9M395.2 419.1L406.2 413.1M396.3 432.2L397.3 428.9M396.3 432.2L399.8 441.8M396.6 338.4L396.7 343.9M396.6 338.4L401.0 335.7M396.7 343.9L399.2 346.6M396.7 405.2L397.4 404.8M397.3 428.9L412.0 421.9M397.4 404.8L398.2 400.0M397.4 404.8L402.2 406.2M397.8 457.4L398.8 459.8M397.8 457.4L399.8 441.8M398.2 400.0L405.7 394.8M398.8 459.8L399.3 482.6M398.8 459.8L427.1 446.2M399.2 346.6L403.1 347.3M399.3 482.6L400.3 484.5M399.8 441.8L418.6 432.7M400.3 329.3L401.0 335.7M400.3 329.3L406.8 322.8M400.3 484.5L401.3 488.7M400.3 484.5L435.4 459.3M400.4 361.4L400.8 356.4M400.4 361.4L405.4 366.0M400.8 356.4L405.2 350.7M401.0 299.5L404.7 314.8M401.0 299.5L417.1 293.7M401.0 335.7L406.4 339.3M401.2 377.0L404.6 382.1M401.2 377.0L405.4 366.0M401.3 488.7L408.9 499.5M402.2 406.2L406.2 413.1M402.2 406.2L410.7 399.5M403.1 347.3L405.2 350.7M403.1 347.3L406.4 339.3M403.8 388.6L404.6 382.1M403.8 388.6L405.7 394.8M404.6 382.1L418.4 381.9M404.7 314.8L406.8 322.8M404.7 314.8L421.8 309.1M404.7 534.3L409.7 521.4M404.7 534.3L412.2 575.3M405.2 350.7L416.2 353.9M405.4 366.0L415.4 362.4M405.7 394.8L410.7 399.5M406.2 413.1L406.6 413.3M406.4 339.3L413.2 337.2M406.6 413.3L412.1 421.6M406.6 413.3L421.2 401.8M406.8 322.8L412.8 327.3M408.9 499.5L414.1 511.8M408.9 499.5L443.9 473.2M409.7 521.4L414.9 515.1M410.7 399.5L421.2 401.8M412.0 421.9L412.1 421.6M412.0 421.9L418.7 432.1M412.1 421.6L425.9 410.4M412.8 327.3L413.2 337.2M412.8 327.3L426.0 322.9M413.2 337.2L416.9 340.4M414.1 511.8L414.9 515.1M414.1 511.8L451.6 485.6M414.9 515.1L426.4 519.8M415.4 362.4L417.2 355.4M415.4 362.4L422.4 373.8M416.2 353.9L416.9 340.4M416.2 353.9L417.2 355.4M416.9 340.4L430.3 337.0M417.2 355.4L435.3 353.0M418.4 381.9L422.4 373.8M418.4 381.9L425.3 395.7M418.6 432.7L418.7 432.1M418.6 432.7L427.2 445.7M418.7 432.1L434.7 419.9M421.2 401.8L422.5 401.6M422.4 373.8L440.4 369.7M422.5 401.6L425.3 395.7M422.5 401.6L425.9 410.4M425.3 395.7L446.4 389.2M425.9 410.4L434.9 418.8M426.4 519.8L436.2 526.0M426.4 519.8L458.1 495.9M427.1 446.2L427.2 445.7M427.1 446.2L435.4 459.3M427.2 445.7L439.3 436.2M434.7 419.9L434.9 418.8M434.7 419.9L439.3 436.2M434.9 418.8L453.2 411.5M435.4 459.3L443.9 472.9M435.4 459.3L446.8 453.0M436.2 526.0L442.8 531.8M436.2 526.0L463.7 505.0M439.3 436.2L448.2 439.4M442.8 531.8L449.0 539.4M442.8 531.8L468.6 512.9M443.9 472.9L443.9 473.2M443.9 472.9L454.0 467.6M443.9 473.2L451.8 484.8M446.8 453.0L448.2 439.4M446.8 453.0L456.7 458.3M448.2 439.4L460.3 434.7M449.0 539.4L450.6 542.1M449.0 539.4L473.0 519.5M450.2 569.5L452.8 546.8M450.6 542.1L452.8 546.8M450.6 542.1L476.9 525.9M451.6 485.6L451.8 484.8M451.6 485.6L458.1 495.8M451.8 484.8L460.8 480.2M452.8 546.8L458.4 546.4M454.0 467.6L456.7 458.3M454.0 467.6L463.4 474.6M456.7 458.3L466.4 454.4M458.1 495.8L458.1 495.9M458.1 495.8L466.4 491.6M458.1 495.9L463.7 505.0M458.4 546.4L466.7 546.8M458.4 546.4L479.8 530.9M460.8 480.2L463.4 474.6M460.8 480.2L468.1 488.8M463.4 474.6L471.6 471.3M463.7 505.0L463.9 505.1M463.9 505.1L468.6 512.7M463.9 505.1L472.3 500.7M466.4 491.6L468.1 488.8M466.4 491.6L472.4 500.5M466.7 546.8L474.3 548.2M466.7 546.8L482.6 535.1M468.1 488.8L476.0 485.8M468.6 512.7L468.6 512.9M468.6 512.7L475.1 509.3M468.6 512.9L473.0 519.5M472.3 500.7L472.4 500.5M472.3 500.7L475.1 509.3M472.4 500.5L479.6 497.5M473.0 519.5L473.5 519.6M473.5 519.6L477.0 525.6M473.5 519.6L477.9 517.1M474.3 548.2L479.2 550.0M474.3 548.2L484.8 538.7M475.1 509.3L477.4 509.9M476.9 525.9L477.0 525.6M476.9 525.9L479.9 530.3M477.0 525.6L481.0 523.4M477.4 509.9L477.9 517.1M477.4 509.9L482.8 507.8M477.9 517.1L481.5 518.1M479.2 550.0L484.3 553.1M479.2 550.0L487.1 541.8M479.8 530.9L479.9 530.3M479.8 530.9L482.6 535.1M479.9 530.3L483.5 528.7M481.0 523.4L481.5 518.1M481.0 523.4L484.1 524.8M481.5 518.1L485.5 516.5M482.6 535.1L484.8 538.7M482.6 535.1L485.7 533.3M482.9 564.4L484.3 553.1M483.5 528.7L484.1 524.8M483.5 528.7L486.2 530.1M484.1 524.8L487.5 523.3M484.3 553.1L485.6 552.9M484.8 538.7L485.2 538.8M485.2 538.8L487.1 541.8M485.2 538.8L487.9 537.3M485.6 552.9L491.6 548.2M485.6 552.9L498.6 562.0M485.7 533.3L486.2 530.1M485.7 533.3L487.9 534.5M486.2 530.1L489.3 528.9M487.1 541.8L487.4 541.9M487.4 541.9L489.9 540.6M487.4 541.9L491.6 548.2M487.9 534.5L487.9 537.3M487.9 534.5L490.6 533.3M487.9 537.3L489.5 538.0M489.5 538.0L489.9 540.6M489.5 538.0L491.7 536.8M489.9 540.6L490.8 541.0M490.8 541.0L492.1 547.9M490.8 541.0L492.8 540.3M491.6 548.2L492.1 547.9M492.1 547.9L495.0 547.4" fill="none" stroke="#7c7ce0" stroke-width="1" style="mix-blend-mode:multiply"/>
<path d="M252.4 197.5L280.7 236.0L329.0 303.4L387.2 381.6L407.7 414.6L434.5 458.7L448.7 480.0L499.4 561.9" fill="none" stroke="#f59a80" stroke-width="0.7"/>
<path d="M226.1 296.9L248.2 321.3L280.6 357.0L327.0 405.8L336.5 417.5L339.7 426.8L346.0 459.8L353.9 494.5L357.1 503.1L366.5 545.7L370.5 567.0" fill="none" stroke="#f59a80" stroke-width="0.7"/>
<path d="M162.6 218.3L373.5 151.8L499.4 561.9L282.3 595.3Z" fill="none" stroke="#f07aec" stroke-width="0.9" stroke-dasharray="4 1.5"/>
<path d="M173.6 218.7h0M184.3 219.8h0M169.2 226.5h0M176.8 235.1h0M213.3 218.3h0M239.3 215.0h0M269.2 197.3h0M293.3 198.3h0M325.9 188.3h0M356.1 166.3h0M364.8 159.2h0M372.4 163.6h0M371.4 174.3h0M375.2 219.8h0M198.6 265.7h0M204.9 294.3h0M209.1 321.0h0M388.2 247.8h0M397.6 270.3h0M405.5 288.9h0M411.3 304.8h0M416.0 318.8h0M420.4 332.2h0M423.9 345.9h0M426.2 362.8h0M430.6 382.1h0M224.3 352.3h0M236.1 384.1h0M246.4 416.4h0M257.0 449.1h0M267.2 481.1h0M277.2 513.4h0M282.8 542.0h0M284.6 573.5h0M283.4 585.0h0M291.3 590.2h0M300.7 583.8h0M335.0 567.4h0M359.8 571.7h0M392.2 559.8h0M425.4 553.7h0M477.9 559.8h0M488.9 561.1h0M468.1 481.6h0M472.7 494.2h0M477.1 504.7h0M480.7 513.9h0M483.7 521.7h0M486.1 527.2h0M488.1 532.3h0M489.7 535.9h0M491.3 539.0h0M492.5 542.2h0M437.3 403.9h0M446.8 428.0h0M455.0 448.8h0M462.0 466.3h0" stroke="#d83ad8" stroke-width="2.7" stroke-linecap="round" fill="none"/>
<path d="M257.1 214.5h0M266.2 207.9h0M285.7 223.0h0M266.2 237.8h0M245.0 298.5h0M226.5 316.3h0M279.7 270.0h0M312.3 245.4h0M299.5 291.4h0M271.0 320.9h0M315.9 304.8h0M327.1 270.6h0M335.0 290.5h0M341.3 304.5h0M327.0 314.4h0M345.1 313.6h0M334.9 321.5h0M348.3 320.7h0M297.9 357.4h0M308.6 371.4h0M293.5 385.0h0M318.8 382.9h0M245.9 343.9h0M286.9 340.2h0M265.1 361.3h0M280.6 373.5h0M305.0 396.7h0M328.1 394.3h0M315.5 406.3h0M334.2 439.4h0M349.4 435.9h0M336.5 453.9h0M353.5 450.1h0M338.4 471.7h0M358.6 466.6h0M340.9 493.2h0M365.7 487.4h0M343.7 520.2h0M351.6 539.8h0M361.0 559.8h0M374.9 512.6h0M376.3 534.6h0M376.3 555.9h0M442.1 484.4h0M449.5 495.0h0M456.6 504.4h0M462.4 512.0h0M467.6 519.1h0M472.4 524.9h0M475.8 530.4h0M479.0 534.8h0M481.8 538.6h0M484.6 541.7h0M487.3 544.3h0M461.0 487.6h0M466.4 498.4h0M470.8 506.8h0M474.7 514.3h0M478.7 521.3h0M481.5 526.5h0M483.7 531.7h0M486.1 535.9h0M488.1 539.5h0M489.7 542.7h0M494.4 553.2h0M420.3 422.2h0M428.7 433.2h0M439.7 447.2h0M447.9 462.2h0M455.0 475.7h0M413.2 413.4h0M404.1 419.4h0M409.0 429.6h0M415.1 442.2h0M422.7 458.0h0M432.6 471.8h0M382.2 381.3h0M393.1 384.2h0M386.0 389.0h0M395.9 389.9h0M390.1 393.9h0M399.4 395.3h0M393.5 398.9h0M403.0 400.5h0M408.0 406.8h0M399.8 411.5h0M351.0 326.5h0M353.4 330.9h0M355.4 334.8h0M358.1 338.4h0M360.7 341.0h0M363.2 344.5h0M366.9 348.5h0M370.8 352.9h0M374.4 358.2h0M378.3 363.1h0M341.0 326.6h0M345.4 330.7h0M349.2 334.0h0M351.9 337.0h0M354.1 341.0h0M356.3 344.1h0M358.9 347.6h0M362.2 352.9h0M365.4 357.8h0M369.1 362.6h0M372.6 367.5h0" stroke="#e03030" stroke-width="2.7" stroke-linecap="round" fill="none"/>
<path d="M342.4 211.2h0M229.0 277.6h0M293.5 315.0h0M315.9 316.6h0M364.9 259.4h0M342.5 286.2h0M384.3 288.0h0M352.0 306.9h0M374.8 308.9h0M394.2 308.9h0M354.9 322.3h0M371.9 323.9h0M384.2 320.7h0M396.8 323.9h0M305.7 333.8h0M321.5 331.3h0M330.9 332.2h0M364.0 331.3h0M372.7 334.1h0M380.1 329.7h0M388.4 329.7h0M395.8 333.8h0M405.7 332.8h0M318.3 343.5h0M409.4 345.1h0M400.2 341.2h0M321.5 355.8h0M330.6 364.8h0M342.8 368.3h0M355.4 364.0h0M362.9 379.8h0M371.1 385.3h0M353.8 388.9h0M397.1 366.9h0M405.7 357.7h0M410.9 372.2h0M388.4 361.2h0M395.8 356.9h0M281.3 405.0h0M362.5 423.6h0M365.2 438.1h0M374.8 459.1h0M374.8 426.8h0M411.2 391.8h0M384.9 438.3h0M387.2 423.0h0M350.2 401.6h0M363.6 413.1h0M370.7 417.8h0M379.1 417.8h0M386.1 413.1h0M346.7 345.5h0M342.9 347.8h0M339.0 345.6h0M338.9 341.1h0M342.7 338.8h0M346.6 341.0h0M352.1 346.2h0M348.6 351.1h0M342.9 353.0h0M337.2 351.2h0M333.6 346.4h0M333.5 340.4h0M337.0 335.5h0M342.7 333.6h0M355.6 353.4h0M348.1 358.7h0M338.9 359.1h0M330.9 354.5h0M326.8 346.3h0M327.7 337.2h0M333.4 330.0h0M388.3 347.5h0M384.5 349.8h0M380.6 347.6h0M380.5 343.1h0M384.3 340.8h0M388.2 343.0h0M393.7 347.2h0M390.8 352.3h0M385.5 354.7h0M379.7 353.6h0M375.8 349.2h0M375.1 343.4h0M378.0 338.3h0M383.3 335.9h0M389.1 337.0h0M393.0 341.4h0M398.4 352.0h0M377.7 359.3h0M370.4 338.6h0M375.7 332.5h0M378.2 403.6h0M374.4 405.9h0M370.5 403.7h0M370.4 399.2h0M374.2 396.9h0M378.1 399.1h0M383.6 403.3h0M380.7 408.4h0M375.4 410.8h0M369.6 409.7h0M365.7 405.3h0M365.0 399.5h0M367.9 394.4h0M373.2 392.0h0M379.0 393.1h0M382.9 397.5h0M389.8 406.5h0M358.3 404.7h0M358.8 396.3h0M363.5 389.2h0M379.4 385.9h0M390.3 398.1h0" stroke="#2828c8" stroke-width="2.7" stroke-linecap="round" fill="none"/>
<path d="M386.0 376.7h0M383.6 378.9h0M380.6 378.0h0M379.8 374.9h0M382.2 372.7h0M385.2 373.6h0M339.6 418.4h0M337.2 420.6h0M334.2 419.7h0M333.4 416.6h0M335.8 414.4h0M338.8 415.3h0" stroke="#e83a3a" stroke-width="1.7" stroke-linecap="round" fill="none"/>
<path d="M342.8 337.3L342.8 349.3M348.0 340.3L337.6 346.3M348.0 346.3L337.6 340.3" stroke="#8f1fe0" stroke-width="2" fill="none"/>
<path d="M384.4 339.3L384.4 351.3M389.6 342.3L379.2 348.3M389.6 348.3L379.2 342.3" stroke="#8f1fe0" stroke-width="2" fill="none"/>
<path d="M374.3 395.4L374.3 407.4M379.5 398.4L369.1 404.4M379.5 404.4L369.1 398.4" stroke="#8f1fe0" stroke-width="2" fill="none"/>
<path d="M381.4 374.3l3 3M384.4 374.3l-3 3M385.3 376.4l3 3M388.3 376.4l-3 3M381.5 378.7l3 3M384.5 378.7l-3 3M377.6 376.6l3 3M380.6 376.6l-3 3M377.5 372.2l3 3M380.5 372.2l-3 3M381.3 369.9l3 3M384.3 369.9l-3 3M385.2 372.0l3 3M388.2 372.0l-3 3" stroke="#e83a4a" stroke-width="0.8" fill="none"/>
<path d="M335.0 416.0l3 3M338.0 416.0l-3 3M338.9 418.1l3 3M341.9 418.1l-3 3M335.1 420.4l3 3M338.1 420.4l-3 3M331.2 418.3l3 3M334.2 418.3l-3 3M331.1 413.9l3 3M334.1 413.9l-3 3M334.9 411.6l3 3M337.9 411.6l-3 3M338.8 413.7l3 3M341.8 413.7l-3 3" stroke="#e83a4a" stroke-width="0.8" fill="none"/>
<g font-size="10.5" fill="#4a4a4a">
<text x="348.2" y="352.6" opacity=".85">B1-111-528</text><text x="389.8" y="354.4">B1-311-29</text><text x="379.4" y="411.4">B1-112-529</text></g>
</svg>
</body>
</html>
